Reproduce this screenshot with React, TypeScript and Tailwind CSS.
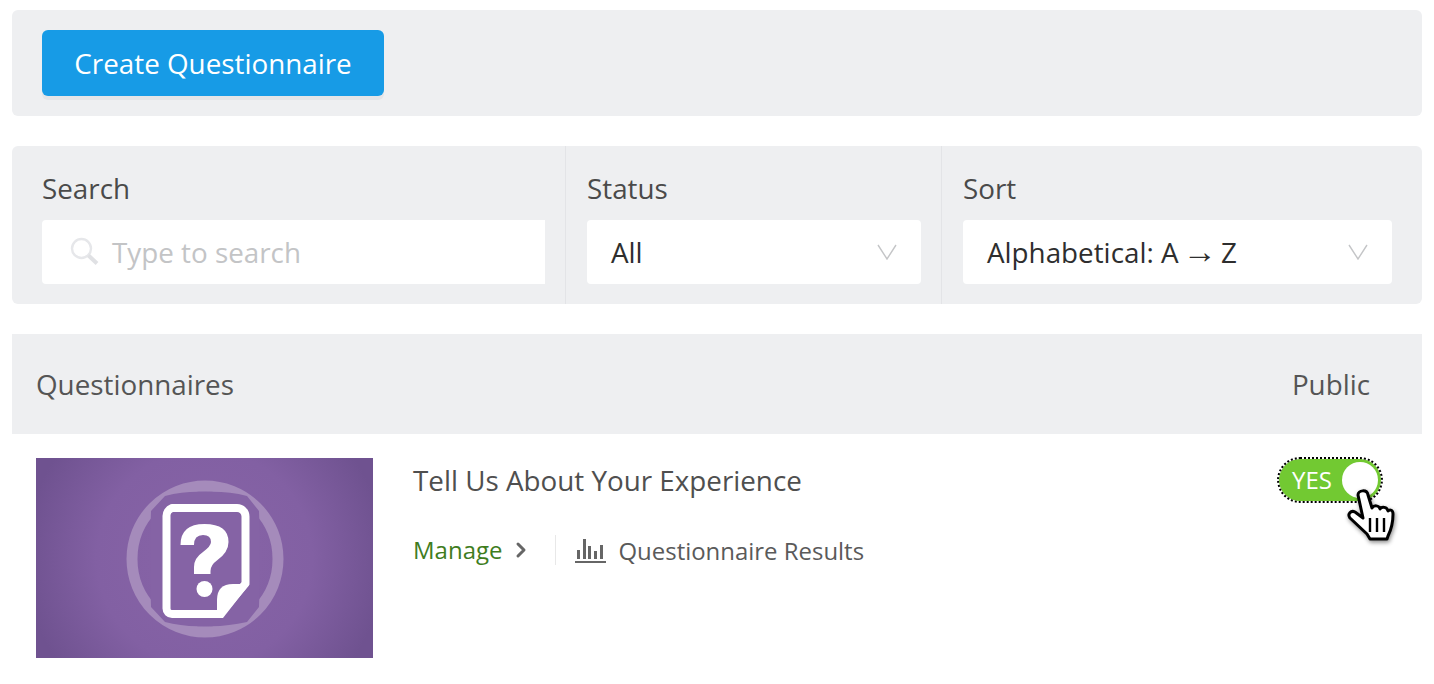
import { ChevronRight } from "lucide-react";

function DownArrow() {
  return (
    <svg width="20" height="16" viewBox="0 0 20 16" fill="none" stroke="#c4c5c7" strokeWidth="1.4">
      <path d="M1 1l9 14 9-14" />
    </svg>
  );
}

function SearchIcon() {
  return (
    <svg width="30" height="30" viewBox="0 0 30 30" fill="none" className="shrink-0">
      <circle cx="11.5" cy="11.5" r="9.5" stroke="#e6e7ea" strokeWidth="2.4" />
      <path d="M18.5 18.5l8.5 8" stroke="#e0e1e4" strokeWidth="4" />
    </svg>
  );
}

function ChartIcon() {
  return (
    <svg width="32" height="26" viewBox="0 0 32 26" fill="#666666">
      <rect x="1" y="24" width="31" height="2" />
      <rect x="3" y="13" width="3" height="9" />
      <rect x="9" y="2" width="3" height="20" />
      <rect x="14" y="9" width="3" height="13" />
      <rect x="20" y="14" width="3" height="8" />
      <rect x="26" y="8" width="3" height="14" />
    </svg>
  );
}

function Thumb() {
  return (
    <div className="flex h-[200px] w-[337px] shrink-0 items-center justify-center bg-[radial-gradient(circle_at_center,#8864a7_0%,#8260a3_55%,#6f5290_92%)]">
      <svg width="160" height="160" viewBox="0 0 160 160" fill="none" className="translate-y-px">
        <circle cx="80" cy="80" r="73" stroke="#a58bbb" strokeWidth="11" />
        <path d="M40 17 Q60 12 80 13 Q102 12 122 17 L134 32 Q136 80 134 128 L122 143 Q100 148 80 147 Q58 148 40 143 L26 128 Q24 80 26 32 Z" fill="#8563a5" />
        <path
          d="M47 29h65a8.500 8.500 0 0 1 8.500 8.500v67L95 135H47a5.500 5.500 0 0 1-5.500-5.500v-92A8.500 8.500 0 0 1 47 29z"
          stroke="#ffffff"
          strokeWidth="8"
          strokeLinejoin="round"
          fill="#8563a5"
        />
        <path d="M92 139v-18q0-16 16-16h16.500L98 139z" fill="#ffffff" />
        <path
          d="M55.500 66q0-21 24-21 24 0 24 18 0 10-11 18-7 5-7 11v3H69v-7q0-9 9-15 8-6 8-10 0-7-8-7-9 0-9 10z"
          fill="#ffffff"
        />
        <circle cx="79.500" cy="110" r="8" fill="#ffffff" />
      </svg>
    </div>
  );
}

function HandCursor() {
  return (
    <svg
      width="52"
      height="54"
      viewBox="0 0 52 54"
      className="absolute left-[68px] top-[31px] drop-shadow-[1px_2px_2px_rgba(0,0,0,0.45)]"
    >
      <path
        d="M13 7c0-5 9-6 10 0l4 13c2-3 7-3 8 1 2-3 7-2 8 2 2-2 5-1 5 3 0 8-1 14-5 22l-1 3H25l-3-5L5 30c-3-4 1-8 5-6l8 6z"
        fill="#ffffff"
        stroke="#000000"
        strokeWidth="3"
        strokeLinejoin="round"
      />
      <path d="M25 30v14M32 30v14M39 30v14" stroke="#000000" strokeWidth="2.400" />
    </svg>
  );
}

function Toggle() {
  return (
    <div className="relative -mt-px h-[46px] w-[106px]">
      <div className="flex h-full w-full items-center justify-between rounded-full border-2 border-dotted border-black bg-[#72c932] bg-clip-padding pl-[13px] pr-[3px]">
        <span className="text-[24px] text-white">YES</span>
        <span className="h-[36px] w-[36px] rounded-full bg-white" />
      </div>
      <HandCursor />
    </div>
  );
}

export default function App() {
  return (
    <div className="flex h-[684px] flex-col bg-white px-3 pt-[10px] font-['Open_Sans',sans-serif] text-[#4a4a4a]">
      <div className="rounded-md bg-[#eeeff1] px-[30px] pb-[20px] pt-[20px]">
        <button className="flex h-[66px] w-[342px] items-center justify-center rounded-md bg-[#179be6] pt-[2px] text-[27.8px] text-white shadow-[0_4px_0_#e4e5e8]">
          Create Questionnaire
        </button>
      </div>

      <div className="mt-[30px] flex h-[158px] rounded-md bg-[#eeeff1]">
        <div className="w-[554px] border-r border-[#e3e4e7] pl-[30px] pr-[20px] pt-[26px]">
          <div className="h-[48px] text-[27.8px] leading-[32px]">Search</div>
          <div className="flex h-[64px] items-center gap-[12px] rounded-l-sm bg-white pl-[28px]">
            <SearchIcon />
            <span className="pt-[2px] text-[27.8px] text-[#c3c4c6]">Type to search</span>
          </div>
        </div>
        <div className="w-[376px] border-r border-[#e3e4e7] pl-[21px] pr-[20px] pt-[26px]">
          <div className="h-[48px] text-[27.8px] leading-[32px]">Status</div>
          <div className="flex h-[64px] items-center justify-between rounded-sm bg-white pl-[24px] pr-[24px] text-[27.8px] text-[#2e2e2e]">
            <span className="pt-[2px]">All</span>
            <DownArrow />
          </div>
        </div>
        <div className="flex-1 pl-[21px] pr-[30px] pt-[26px]">
          <div className="h-[48px] text-[27.8px] leading-[32px]">Sort</div>
          <div className="flex h-[64px] items-center justify-between rounded-sm bg-white pl-[24px] pr-[24px] text-[27.8px] text-[#2e2e2e]">
            <span className="pt-[2px]">
              Alphabetical:{" "}
              <span className="[word-spacing:-3px]">
                A <span className="font-['Liberation_Sans',sans-serif] text-[34px] leading-none">→</span> Z
              </span>
            </span>
            <DownArrow />
          </div>
        </div>
      </div>

      <div className="mt-[30px] flex h-[100px] items-center justify-between bg-[#eeeff1] pl-[24px] pr-[52px] pt-[2px] text-[27.8px] text-[#555555]">
        <span>Questionnaires</span>
        <span>Public</span>
      </div>

      <div className="flex pl-[24px] pr-[39px] pt-[24px]">
        <Thumb />
        <div className="flex-1 pl-[40px]">
          <div className="text-[27.8px] leading-[44px] text-[#4f4f4f]">Tell Us About Your Experience</div>
          <div className="mt-[33px] flex h-[30px] items-center text-[24px]">
            <span className="text-[#3f7d1e]">Manage</span>
            <ChevronRight className="ml-[7px] text-[#666666]" size={24} strokeWidth={3} />
            <span className="ml-[22px] mr-[18px] h-[30px] w-px bg-[#e8e8e8]" />
            <ChartIcon />
            <span className="ml-[12px] pt-[2px] text-[23.95px] text-[#5a5a5a]">Questionnaire Results</span>
          </div>
        </div>
        <Toggle />
      </div>
    </div>
  );
}
